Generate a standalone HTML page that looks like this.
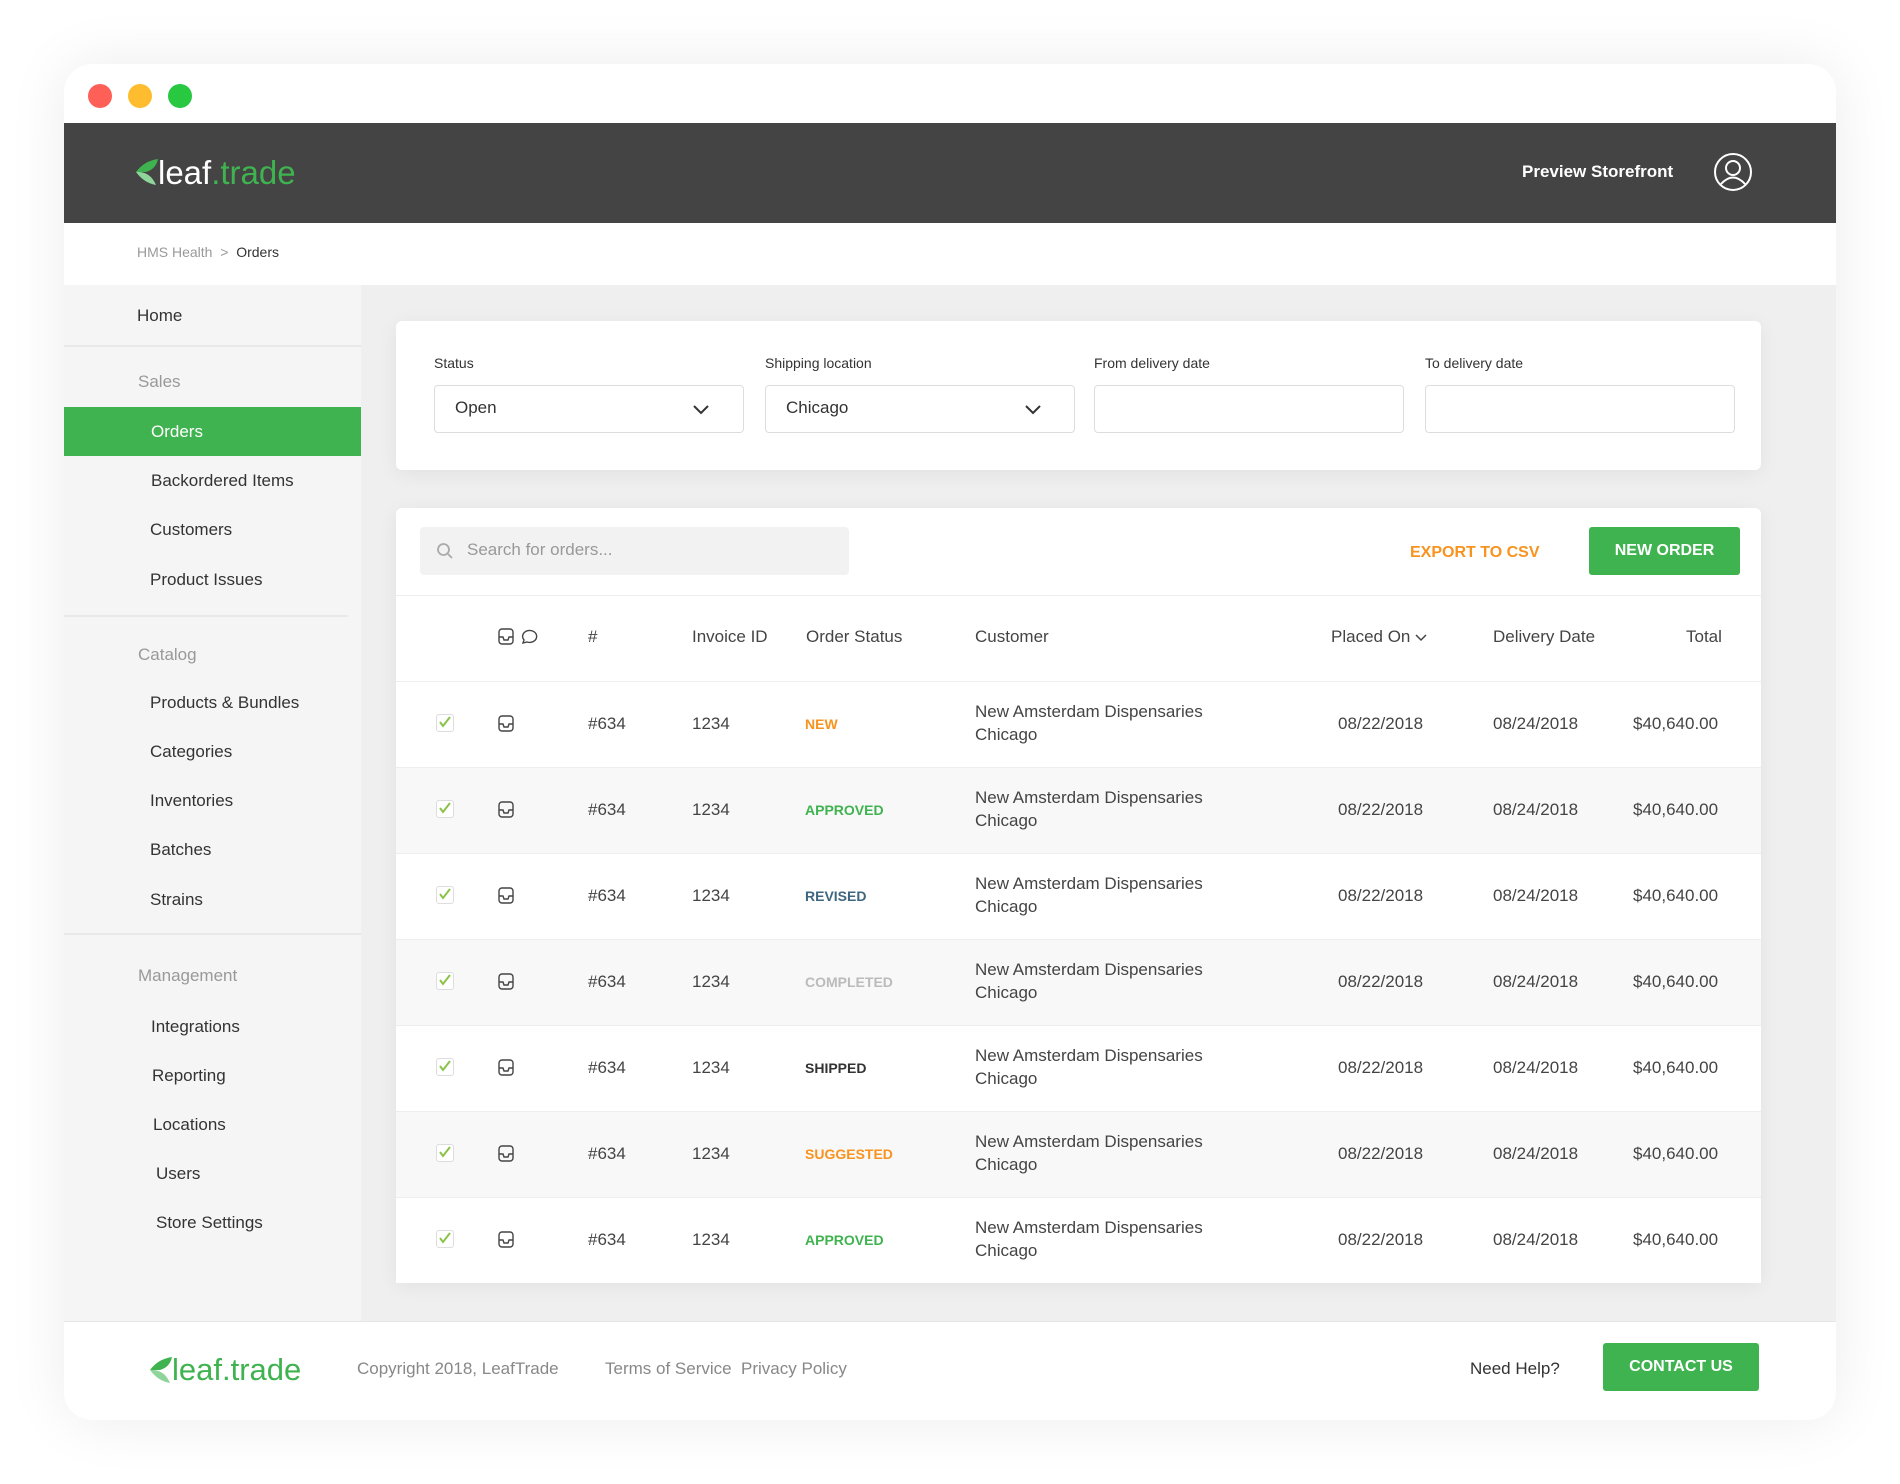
<!DOCTYPE html><html><head><style>
*{margin:0;padding:0;box-sizing:border-box}
body{width:1900px;height:1484px;background:#fff;font-family:"Liberation Sans",sans-serif;color:#333;position:relative;overflow:hidden}
.a{position:absolute;white-space:nowrap}
.win{position:absolute;left:64px;top:64px;width:1772px;height:1356px;background:#fff;border-radius:28px;box-shadow:0 0 60px rgba(0,0,0,.08);overflow:hidden}
.dot{position:absolute;top:84px;width:24px;height:24px;border-radius:50%}
.si{position:absolute;font-size:17px;color:#333}
.sh{position:absolute;font-size:17px;color:#999}
.card{position:absolute;background:#fff;border-radius:6px;box-shadow:0 4px 20px rgba(0,0,0,.06)}
.lbl{position:absolute;top:355px;font-size:14px;color:#333}
.inp{position:absolute;top:385px;height:48px;width:310px;border:1px solid #ddd;border-radius:4px;background:#fff;font-size:17px;padding:12px 20px}
.row{position:absolute;left:396px;width:1365px;height:86px;border-top:1px solid #eee}
.c{position:absolute;font-size:17px;color:#444}
.st{position:absolute;font-size:14px;font-weight:bold}
</style></head><body>
<div class="win"></div>
<div class="dot" style="left:88px;background:#fe5f57"></div>
<div class="dot" style="left:128px;background:#febc2e"></div>
<div class="dot" style="left:168px;background:#28c840"></div>
<div class="a" style="left:64px;top:123px;width:1772px;height:100px;background:#444"></div>
<svg class="a" style="left:136px;top:159px" width="24" height="26" viewBox="0 0 24 26"><path d="M0 13 Q8 2 22 0 Q20 10 10 13Z" fill="#3fb34f"/><path d="M0 13 Q14 12 20 26 Q8 24 0 13Z" fill="#8fd49a"/></svg>
<div class="a" style="left:158px;top:154px;font-size:33px;color:#fff">leaf<span style="color:#3fb34f">.trade</span></div>
<div class="a" style="left:1522px;top:162px;font-size:17px;font-weight:bold;color:#fff">Preview Storefront</div>
<svg class="a" style="left:1714px;top:153px" width="38" height="38" viewBox="0 0 38 38" fill="none" stroke="#fff" stroke-width="2"><circle cx="19" cy="19" r="18"/><circle cx="19" cy="15" r="7"/><path d="M7 31 Q19 18 31 31"/></svg>
<div class="a" style="left:137px;top:244px;font-size:14px;color:#999">HMS Health &nbsp;&gt;&nbsp; <span style="color:#333">Orders</span></div>
<div class="a" style="left:64px;top:285px;width:1772px;height:1036px;background:#efefef"></div>
<div class="a" style="left:64px;top:285px;width:297px;height:1036px;background:#f5f5f5"></div>
<div class="a" style="left:64px;top:345px;width:297px;height:2px;background:#e8e8e8"></div>
<div class="a" style="left:64px;top:615px;width:284px;height:2px;background:#e8e8e8"></div>
<div class="a" style="left:64px;top:933px;width:297px;height:2px;background:#e8e8e8"></div>
<div class="a" style="left:64px;top:407px;width:297px;height:49px;background:#3fb34f"></div>
<div class="si" style="left:137px;top:306px">Home</div>
<div class="sh" style="left:138px;top:372px">Sales</div>
<div class="si" style="left:151px;top:422px;color:#fff">Orders</div>
<div class="si" style="left:151px;top:471px">Backordered Items</div>
<div class="si" style="left:150px;top:520px">Customers</div>
<div class="si" style="left:150px;top:570px">Product Issues</div>
<div class="sh" style="left:138px;top:645px">Catalog</div>
<div class="si" style="left:150px;top:693px">Products &amp; Bundles</div>
<div class="si" style="left:150px;top:742px">Categories</div>
<div class="si" style="left:150px;top:791px">Inventories</div>
<div class="si" style="left:150px;top:840px">Batches</div>
<div class="si" style="left:150px;top:890px">Strains</div>
<div class="sh" style="left:138px;top:966px">Management</div>
<div class="si" style="left:151px;top:1017px">Integrations</div>
<div class="si" style="left:152px;top:1066px">Reporting</div>
<div class="si" style="left:153px;top:1115px">Locations</div>
<div class="si" style="left:156px;top:1164px">Users</div>
<div class="si" style="left:156px;top:1213px">Store Settings</div>

<div class="card" style="left:396px;top:321px;width:1365px;height:149px"></div>
<div class="lbl" style="left:434px">Status</div>
<div class="lbl" style="left:765px">Shipping location</div>
<div class="lbl" style="left:1094px">From delivery date</div>
<div class="lbl" style="left:1425px">To delivery date</div>
<div class="inp" style="left:434px">Open</div>
<div class="inp" style="left:765px">Chicago</div>
<div class="inp" style="left:1094px"></div>
<div class="inp" style="left:1425px"></div>
<svg class="a" style="left:692px;top:404px" width="18" height="12" viewBox="0 0 18 12" fill="none" stroke="#333" stroke-width="2"><path d="M2 2l7 7 7-7"/></svg>
<svg class="a" style="left:1024px;top:404px" width="18" height="12" viewBox="0 0 18 12" fill="none" stroke="#333" stroke-width="2"><path d="M2 2l7 7 7-7"/></svg>

<div class="card" style="left:396px;top:508px;width:1365px;height:774px"></div>
<div class="a" style="left:420px;top:527px;width:429px;height:48px;background:#f2f2f2;border-radius:4px"></div>
<svg class="a" style="left:436px;top:542px" width="18" height="18" viewBox="0 0 18 18" fill="none" stroke="#aaa" stroke-width="1.8"><circle cx="7.5" cy="7.5" r="5.5"/><path d="M12 12l4 4"/></svg>
<div class="a" style="left:467px;top:540px;font-size:17px;color:#999">Search for orders...</div>
<div class="a" style="left:1410px;top:544px;font-size:16px;font-weight:bold;color:#f7931e">EXPORT TO CSV</div>
<div class="a" style="left:1589px;top:527px;width:151px;height:48px;background:#3fb34f;border-radius:3px;color:#fff;font-size:16px;font-weight:bold;text-align:center;line-height:48px">NEW ORDER</div>
<div class="a" style="left:396px;top:595px;width:1365px;height:1px;background:#eee"></div>
<svg class="a" style="left:498px;top:628px" width="44" height="18" viewBox="0 0 44 18" fill="none" stroke="#444" stroke-width="1.4"><rect x="1" y="1" width="14" height="15" rx="3"/><path d="M1 9h4l1 3h4l1-3h4"/><path d="M25 15l1-3a7 6 0 1 1 3 2z"/></svg>
<div class="c" style="left:588px;top:627px">#</div>
<div class="c" style="left:692px;top:627px">Invoice ID</div>
<div class="c" style="left:806px;top:627px">Order Status</div>
<div class="c" style="left:975px;top:627px">Customer</div>
<div class="c" style="left:1331px;top:627px">Placed On <svg width="12" height="8" viewBox="0 0 12 8" fill="none" stroke="#444" stroke-width="1.5"><path d="M1 1l5 5 5-5"/></svg></div>
<div class="c" style="left:1493px;top:627px">Delivery Date</div>
<div class="c" style="left:1686px;top:627px">Total</div>
<div id="rows"></div>
<script>
var s=[["NEW","#f7931e"],["APPROVED","#3fb34f"],["REVISED","#3f6681"],["COMPLETED","#bbb"],["SHIPPED","#333"],["SUGGESTED","#f7931e"],["APPROVED","#3fb34f"]];
var h="";
for(var i=0;i<7;i++){var t=681+i*86,m=t+43;
h+='<div class="row" style="top:'+t+'px;background:'+(i%2?'#f8f8f8':'#fff')+'"></div>';
h+='<div class="a" style="left:436px;top:'+(m-10)+'px;width:18px;height:18px;border:1px solid #ddd;border-radius:3px;background:#fff"></div>';
h+='<svg class="a" style="left:438px;top:'+(m-9)+'px" width="14" height="14" viewBox="0 0 14 14" fill="none" stroke="#8bc34a" stroke-width="2"><path d="M2 7l3 4 7-9"/></svg>';
h+='<svg class="a" style="left:498px;top:'+(m-9)+'px" width="16" height="18" viewBox="0 0 16 18" fill="none" stroke="#444" stroke-width="1.4"><rect x="1" y="1" width="14" height="15" rx="3"/><path d="M1 9h4l1 3h4l1-3h4"/></svg>';
h+='<div class="c" style="left:588px;top:'+(m-10)+'px">#634</div>';
h+='<div class="c" style="left:692px;top:'+(m-10)+'px">1234</div>';
h+='<div class="st" style="left:805px;top:'+(m-8)+'px;color:'+s[i][1]+'">'+s[i][0]+'</div>';
h+='<div class="c" style="left:975px;top:'+(m-24)+'px;line-height:23px">New Amsterdam Dispensaries<br>Chicago</div>';
h+='<div class="c" style="left:1338px;top:'+(m-10)+'px">08/22/2018</div>';
h+='<div class="c" style="left:1493px;top:'+(m-10)+'px">08/24/2018</div>';
h+='<div class="c" style="left:1633px;top:'+(m-10)+'px">$40,640.00</div>';}
document.getElementById('rows').innerHTML=h;
</script>
<div class="a" style="left:64px;top:1321px;width:1772px;height:1px;background:#e6e6e6"></div>
<svg class="a" style="left:150px;top:1357px" width="24" height="26" viewBox="0 0 24 26"><path d="M0 13 Q8 2 22 0 Q20 10 10 13Z" fill="#3fb34f"/><path d="M0 13 Q14 12 20 26 Q8 24 0 13Z" fill="#8fd49a"/></svg>
<div class="a" style="left:172px;top:1352px;font-size:31px;color:#3fb34f">leaf.trade</div>
<div class="a" style="left:357px;top:1359px;font-size:17px;color:#888">Copyright 2018, LeafTrade</div>
<div class="a" style="left:605px;top:1359px;font-size:17px;color:#888">Terms of Service &nbsp;Privacy Policy</div>
<div class="a" style="left:1470px;top:1359px;font-size:17px;color:#333">Need Help?</div>
<div class="a" style="left:1603px;top:1343px;width:156px;height:48px;background:#3fb34f;border-radius:3px;color:#fff;font-size:16px;font-weight:bold;text-align:center;line-height:48px">CONTACT US</div>
</body></html>
